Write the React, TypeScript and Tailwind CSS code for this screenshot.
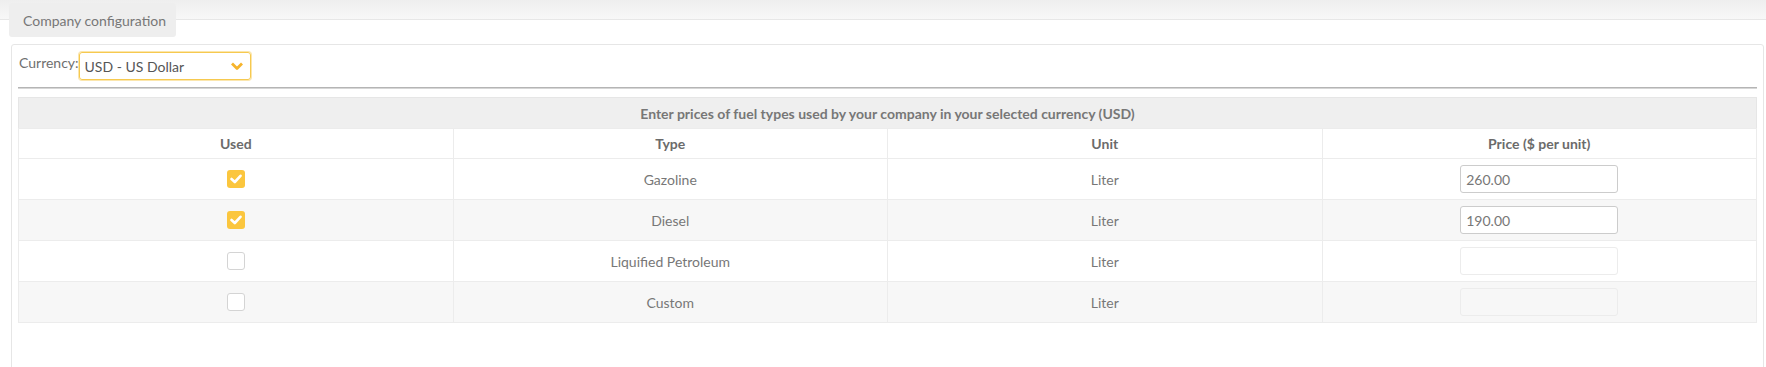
import React from 'react';

interface FuelRow {
  name: string;
  unit: string;
  used: boolean;
  price: string;
}

const rows: FuelRow[] = [
  { name: 'Gazoline', unit: 'Liter', used: true, price: '260.00' },
  { name: 'Diesel', unit: 'Liter', used: true, price: '190.00' },
  { name: 'Liquified Petroleum', unit: 'Liter', used: false, price: '' },
  { name: 'Custom', unit: 'Liter', used: false, price: '' },
];

const Checkbox: React.FC<{ checked: boolean }> = ({ checked }) =>
  checked ? (
    <span className="mx-auto flex h-[18px] w-[18px] items-center justify-center rounded-[3px] bg-[#fbc63e]">
      <svg width="12" height="10" viewBox="0 0 12 10">
        <polyline points="1.5,5 4.8,8 10.5,1.8" fill="none" stroke="#fff" strokeWidth="2.6" strokeLinecap="round" strokeLinejoin="round" />
      </svg>
    </span>
  ) : (
    <span className="mx-auto block h-[18px] w-[18px] rounded-[3px] border border-[#d4d4d4] bg-white" />
  );

const App: React.FC = () => {
  return (
    <div className="min-h-screen bg-white font-['Lato','Liberation_Sans',sans-serif] text-[14px] text-[#777]">
      <div className="h-[20px] border-b border-[#e7e7e7] bg-linear-to-b from-[#eeeeee] to-[#f8f8f8]" />
      <div className="-mt-[17px] ml-[9px] flex h-[34px] w-[167px] items-center rounded-[3px] bg-[#eeeeee] pl-[14px] text-[#777]">
        Company configuration
      </div>

      <div className="mt-[7px] ml-[11px] mr-[2px] rounded-[3px] border border-[#e6e6e6] px-[6px] pt-[7px] pb-[80px]">
        <div className="flex items-start">
          <span className="pl-[1px] text-[#6f6f6f]">Currency:</span>
          <div className="flex h-[28px] w-[172px] items-center justify-between rounded-[3px] border border-[#f6c94f] pl-[5px] pr-[6px] text-[#555] shadow-[0_0_0_1px_#fbe6ad]">
            <span>USD - US Dollar</span>
            <svg width="14" height="10" viewBox="0 0 14 10">
              <polyline points="2,2.5 7,7.5 12,2.5" fill="none" stroke="#f6b42c" strokeWidth="2.8" strokeLinejoin="round" />
            </svg>
          </div>
        </div>

        <div className="mt-[7px] h-[2px] border-t border-[#b5b5b5] bg-[#d6d6d6]" />

        <table className="mt-[8px] w-full table-fixed border-collapse border border-[#e6e6e6] text-center">
          <thead>
            <tr>
              <th colSpan={4} className="h-[31px] bg-[#efefef] font-bold text-[#777]">
                Enter prices of fuel types used by your company in your selected currency (USD)
              </th>
            </tr>
            <tr className="bg-white">
              <th className="h-[30px] border border-[#ececec] font-bold text-[#6b6b6b]">Used</th>
              <th className="border border-[#ececec] font-bold text-[#6b6b6b]">Type</th>
              <th className="border border-[#ececec] font-bold text-[#6b6b6b]">Unit</th>
              <th className="border border-[#ececec] font-bold text-[#6b6b6b]">Price ($ per unit)</th>
            </tr>
          </thead>
          <tbody>
            {rows.map((row, i) => (
              <tr key={row.name} className={i % 2 === 1 ? 'bg-[#f7f7f7]' : 'bg-white'}>
                <td className="h-[41px] border border-[#ececec]">
                  <Checkbox checked={row.used} />
                </td>
                <td className="border border-[#ececec]">{row.name}</td>
                <td className="border border-[#ececec]">{row.unit}</td>
                <td className="border border-[#ececec]">
                  <input
                    type="text"
                    defaultValue={row.price}
                    disabled={!row.used}
                    className={
                      row.used
                        ? 'mx-auto block h-[28px] w-[158px] rounded-[3px] border border-[#cccccc] bg-white px-[5px] text-[14px] text-[#777] outline-none'
                        : 'mx-auto block h-[28px] w-[158px] rounded-[3px] border border-[#ececec] bg-transparent px-[5px] text-[14px] outline-none'
                    }
                  />
                </td>
              </tr>
            ))}
          </tbody>
        </table>
      </div>
    </div>
  );
};

export default App;
